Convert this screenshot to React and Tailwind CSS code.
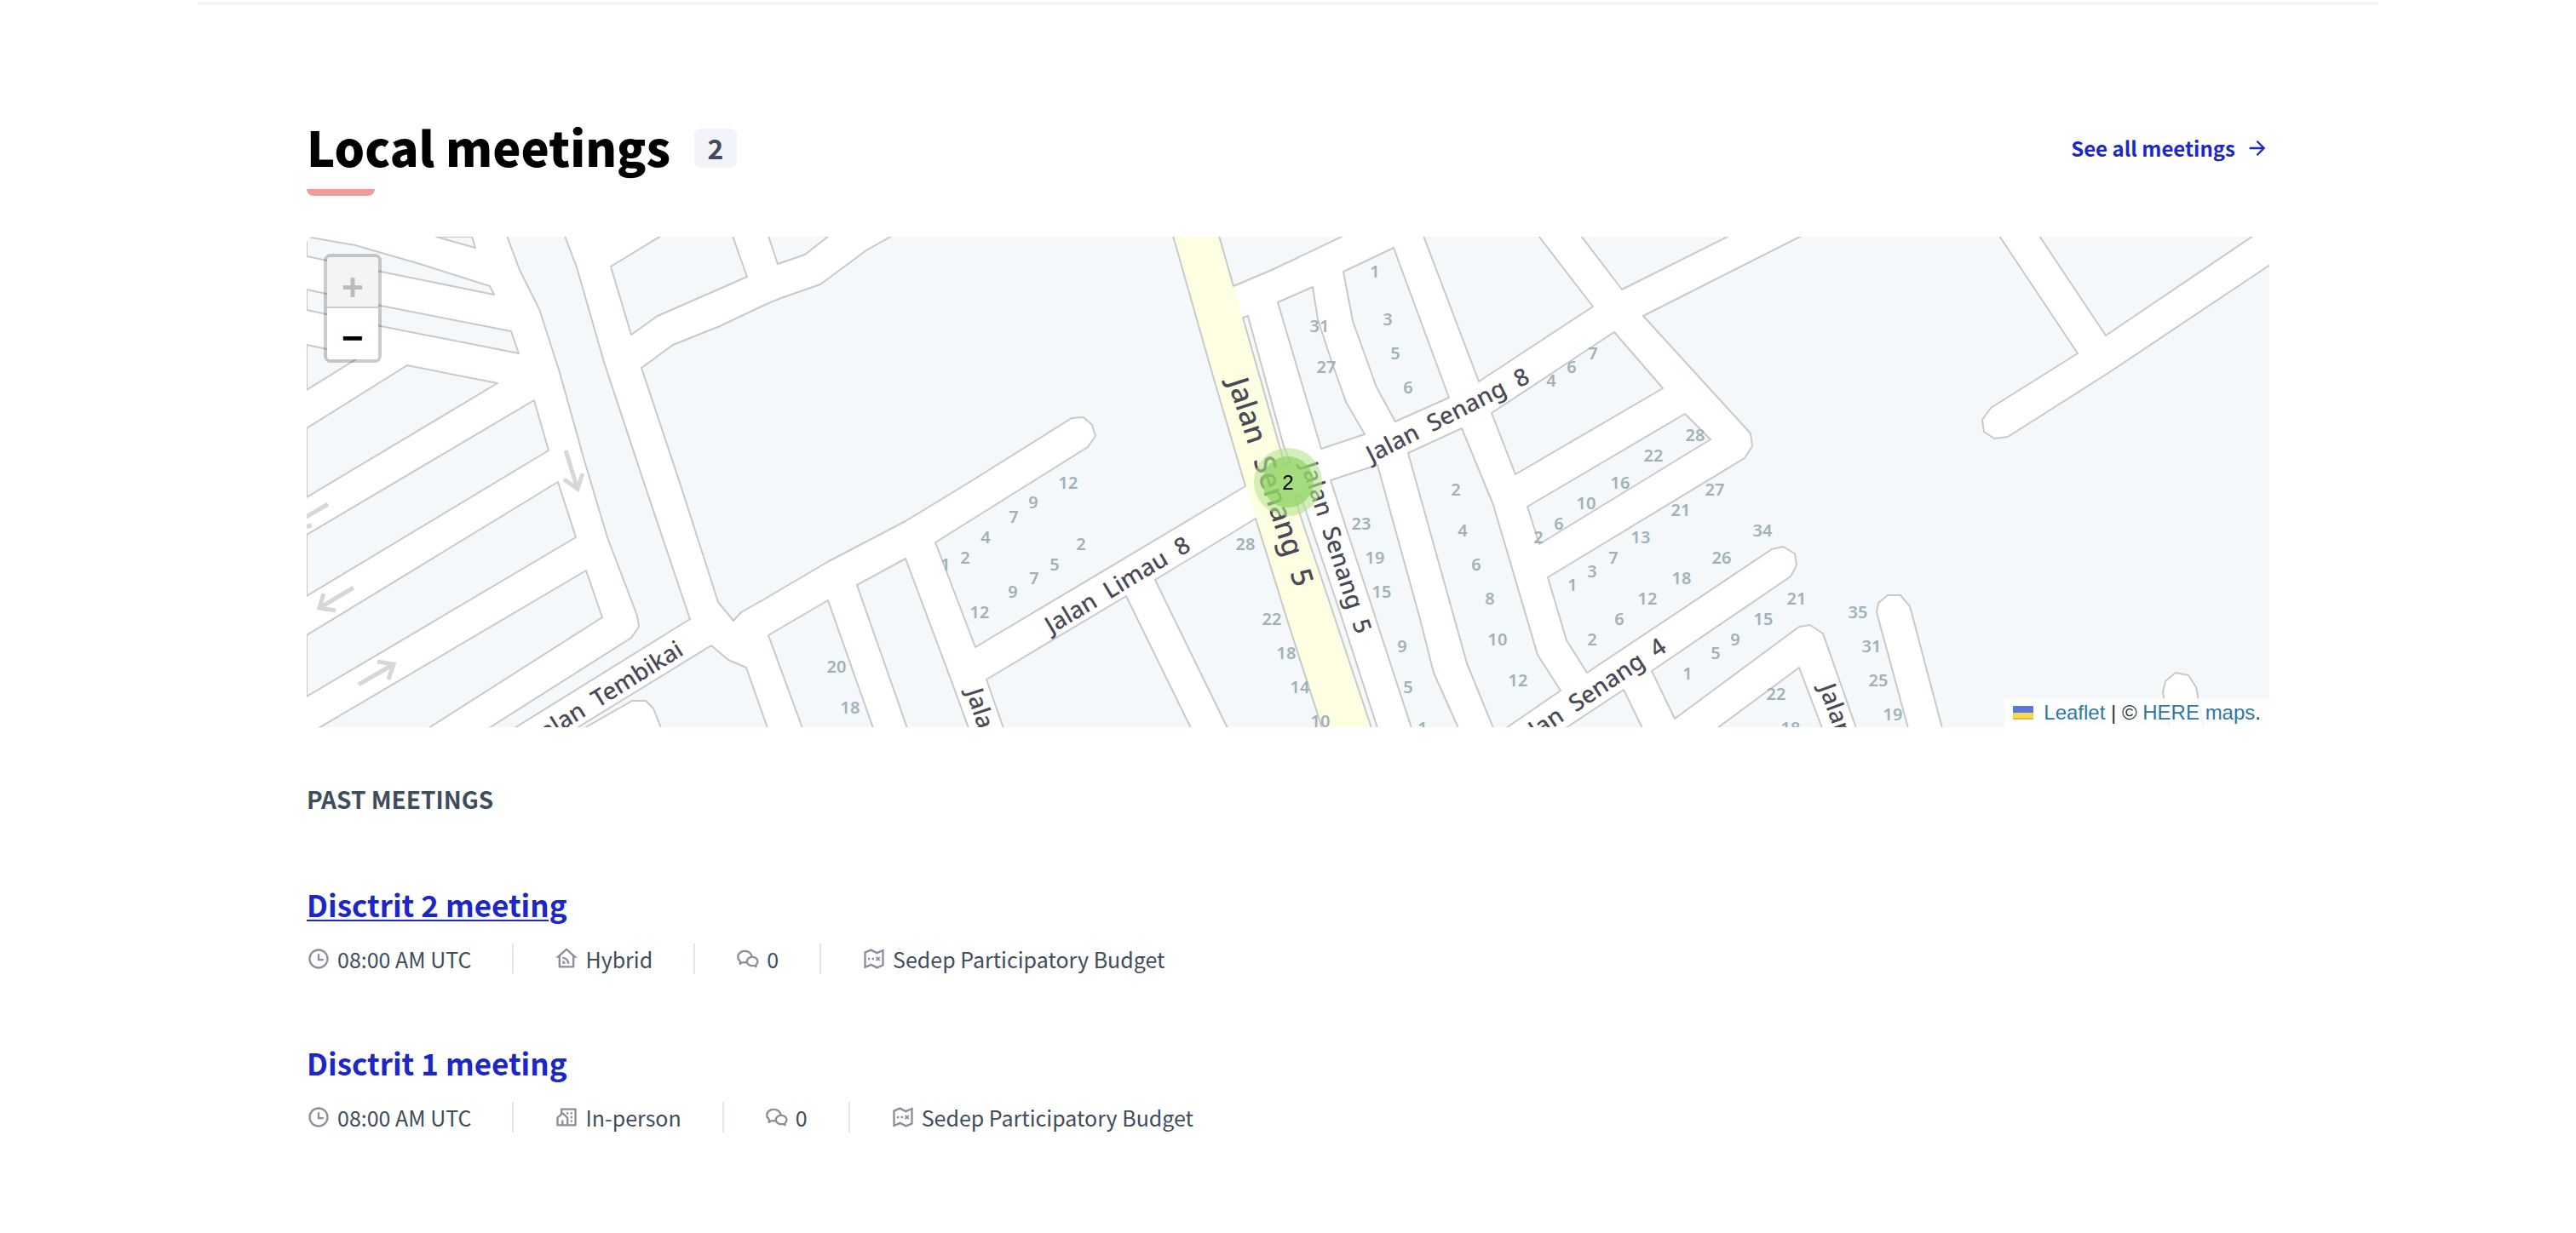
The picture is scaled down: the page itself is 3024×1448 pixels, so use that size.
import React from "react";
import {
  RiArrowRightLine,
  RiCommunityLine,
  RiHomeWifiLine,
  RiTimeLine,
  RiTreasureMapLine,
  RiWechatLine,
} from "react-icons/ri";

// City blocks; the white gaps between them read as streets.
const BLOCKS = [
  "152,0 198,13 194,0",
  "0,0 57,10 133,32 215,58 220,68 87,41 0,23",
  "0,62 87,81 240,111 249,137 87,105 0,86",
  "0,127 24,132 64,140 0,180",
  "118,151 224,172 0,306 0,225",
  "267,192 284,251 0,422 0,350",
  "295,288 316,353 0,540 0,468",
  "328,392 347,447 143,577 14,577",
  "235,-1 250,39 273,85 296,156 326,263 353,353 388,445 390,458 381,471 214,577 244,577 450,449 397,292 349,147 317,36 303,-1",
  "357,35 416,-1 500,-1 517,47 412,93 381,115",
  "542,-1 553,32 585,21 613,-1",
  "393,154 430,127 485,105 540,79 557,72 603,56 657,16 687,-1 1017,-1 1033,55 1060,150 1102,293 785,482 738,359 917,247 926,234 922,221 912,212 898,213 780,287 703,334 613,381 540,424 510,441 501,451 483,429 439,292",
  "475,480 495,497 516,506 541,577 416,577 407,554 398,545 382,545 326,577 317,577",
  "542,468 612,427 665,577 582,577",
  "646,409 703,378 757,522 777,577 705,577",
  "798,520 962,422 1038,577 818,577",
  "996,403 1114,331 1153,456 1192,577 1081,577",
  "1099,95 1105,93 1147,246 1155,265 1148,267 1142,246",
  "1160,305 1167,303 1175,328 1213,441 1257,577 1250,577 1197,418 1166,326",
  "1071,-1 1088,58 1133,39 1217,-1",
  "1140,77 1181,59 1187,97 1203,146 1220,194 1242,232 1191,249",
  "1217,41 1276,13 1341,189 1278,217 1256,177 1228,99",
  "1311,-1 1376,170 1510,82 1446,-1",
  "1496,-1 1544,62 1670,-1",
  "1569,93 1755,-1 1987,-1 2079,137 1977,201 1967,215 1969,229 1981,237 1997,235 2115,160 2305,33 2305,577 2227,577 2218,529 2209,515 2194,512 2182,522 2179,535 2187,577 1920,577 1882,434 1871,421 1856,421 1845,430 1843,441 1880,577 1819,577 1780,466 1765,456 1752,458 1606,566 1579,510 1742,399 1749,386 1747,372 1733,364 1720,367 1503,512 1479,474 1457,400 1688,260 1697,246 1695,231",
  "1535,112 1592,178 1419,279 1391,207",
  "1618,208 1648,238 1447,361 1433,317",
  "1293,254 1356,225 1393,315 1445,491 1472,533 1408,577 1393,577 1362,501",
  "1202,286 1257,268 1307,449 1323,512 1352,577 1297,577",
  "1546,532 1568,577 1478,577",
  "1752,506 1779,577 1656,577",
  "2034,-1 2112,116 2285,-1",
];

const MAIN_ROAD =
  "1017,0 1071,0 1088,58 1099,95 1142,246 1166,326 1197,418 1250,576 1192,576 1153,456 1114,331 1102,293 1060,150 1033,55";

const ARROWS = [
  "M304 251L318 296M302 285L318 296L324 278",
  "M55 412L15 436M20 419L15 436L34 439",
  "M25 314L-4 331M-4 341L6 339",
  "M61 526L102 502M83 499L102 502L96 520",
];

const HOUSES = [
  [894, 289, "12"], [853, 312, "9"], [830, 329, "7"], [797, 353, "4"], [773, 377, "2"], [750, 385, "1"],
  [909, 361, "2"], [878, 385, "5"], [854, 401, "7"], [829, 417, "9"], [790, 441, "12"], [622, 505, "20"],
  [638, 553, "18"], [1254, 41, "1"], [1269, 97, "3"], [1278, 137, "5"], [1293, 177, "6"], [1189, 105, "31"],
  [1197, 153, "27"], [1485, 153, "6"], [1461, 169, "4"], [1102, 361, "28"], [1133, 449, "22"], [1150, 489, "18"],
  [1166, 529, "14"], [1190, 569, "10"], [1238, 337, "23"], [1254, 377, "19"], [1262, 417, "15"], [1286, 481, "9"],
  [1293, 529, "5"], [1310, 577, "1"], [1349, 297, "2"], [1357, 345, "4"], [1373, 385, "6"], [1389, 425, "8"],
  [1398, 473, "10"], [1422, 521, "12"], [1510, 137, "7"], [1630, 233, "28"], [1581, 257, "22"], [1542, 289, "16"],
  [1502, 313, "10"], [1470, 337, "6"], [1446, 353, "2"], [1653, 297, "27"], [1613, 321, "21"], [1566, 353, "13"],
  [1534, 377, "7"], [1509, 393, "3"], [1486, 409, "1"], [1709, 345, "34"], [1661, 377, "26"], [1614, 401, "18"],
  [1574, 425, "12"], [1541, 449, "6"], [1509, 473, "2"], [1749, 425, "21"], [1710, 449, "15"], [1677, 473, "9"],
  [1654, 489, "5"], [1621, 513, "1"], [1821, 441, "35"], [1837, 481, "31"], [1845, 521, "25"], [1862, 561, "19"],
  [1725, 537, "22"], [1742, 577, "18"],
];

const STREETS = [
  { x: 874, y: 467, angle: -31, size: 28, anchor: "start", name: "Jalan\u00a0 Limau\u00a0 8" },
  { x: 1250, y: 266, angle: -27, size: 28, anchor: "start", name: "Jalan\u00a0 Senang\u00a0 8" },
  { x: 1598, y: 486, angle: -34, size: 28, anchor: "end", name: "Jalan\u00a0 Senang\u00a0 4" },
  { x: 444, y: 490, angle: -32, size: 28, anchor: "end", name: "Jalan\u00a0 Tembikai" },
  { x: 774, y: 534, angle: 72, size: 28, anchor: "start", name: "Jalan" },
  { x: 1775, y: 529, angle: 70, size: 28, anchor: "start", name: "Jalan" },
  { x: 1081, y: 170, angle: 72, size: 34, anchor: "start", name: "Jalan\u00a0 Senang\u00a0 5" },
  { x: 1167, y: 268, angle: 72, size: 28, anchor: "start", name: "Jalan\u00a0 Senang\u00a0 5" },
];

function StreetMap() {
  return (
    <svg
      viewBox="0 0 2304 576"
      preserveAspectRatio="xMidYMid slice"
      className="block h-full w-full bg-white"
      role="img"
      aria-label="Map of meeting locations"
    >
      <polygon points={MAIN_ROAD} fill="#fefee3" />
      <g fill="#f4f8fb" stroke="#c9cac8" strokeWidth="2" strokeLinejoin="round">
        {BLOCKS.map((points) => (
          <polygon key={points} points={points} />
        ))}
      </g>
      <g fill="none" stroke="#d6d7d7" strokeWidth="5">
        {ARROWS.map((d) => (
          <path key={d} d={d} />
        ))}
      </g>
      <g fill="#a2b1b5" fontSize="20" fontWeight="600" textAnchor="middle" fontFamily='"Noto Sans", sans-serif'>
        {HOUSES.map(([x, y, n]) => (
          <text key={x + "-" + y} x={x} y={y + 7}>
            {n}
          </text>
        ))}
      </g>
      <g fill="#4a4a56" fontWeight="500" fontFamily='"Noto Sans", sans-serif'>
        {STREETS.map((s) => (
          <text
            key={s.x + "-" + s.y}
            x={s.x}
            y={s.y}
            fontSize={s.size}
            textAnchor={s.anchor}
            transform={`rotate(${s.angle} ${s.x} ${s.y})`}
          >
            {s.name}
          </text>
        ))}
      </g>
    </svg>
  );
}

function MapPanel() {
  return (
    <div className="relative h-[576px] overflow-hidden rounded-lg font-['Liberation_Sans',sans-serif]">
      <StreetMap />

      <button
        type="button"
        aria-label="2 meetings"
        className="absolute top-1/2 left-1/2 flex size-20 -translate-x-1/2 -translate-y-1/2 items-center justify-center rounded-full bg-[#b5e28c]/60"
      >
        <span className="flex size-[60px] items-center justify-center rounded-full bg-[#85d15a]/60 pt-0.5 text-2xl text-black">
          2
        </span>
      </button>

      <div className="absolute top-5 left-5 flex w-[68px] flex-col overflow-hidden rounded-lg border-4 border-black/20 bg-clip-padding font-['Liberation_Mono',monospace] text-[44px] font-bold">
        <button
          type="button"
          disabled
          aria-label="Zoom in"
          className="flex h-[60px] items-center justify-center border-b-2 border-[#ccc] bg-[#f4f4f4] pt-5 text-[#bbb]"
        >
          +
        </button>
        <button
          type="button"
          aria-label="Zoom out"
          className="flex h-[60px] items-center justify-center bg-white pt-4 text-black"
        >
          −
        </button>
      </div>

      <div className="absolute right-0 bottom-0 flex h-[34px] items-center bg-white/80 px-[10px] text-2xl text-[#333]">
        <svg viewBox="0 0 12 8" className="mr-3 h-4 w-6" aria-hidden="true">
          <path fill="#5779da" d="M0 0h12v4H0z" />
          <path fill="#fbd84a" d="M0 4h12v3H0z" />
          <path fill="#dfbd45" d="M0 7h12v1H0z" />
        </svg>
        <p>
          <a href="#leaflet" className="text-[#2f77a5]">Leaflet</a> | ©{" "}
          <a href="#here" className="text-[#2f77a5]">HERE maps</a>.
        </p>
      </div>
    </div>
  );
}

const MEETINGS = [
  { title: "Disctrit 2 meeting", underlined: true, type: "Hybrid", TypeIcon: RiHomeWifiLine },
  { title: "Disctrit 1 meeting", underlined: false, type: "In-person", TypeIcon: RiCommunityLine },
];

function Meta({ Icon, children }) {
  return (
    <li className="flex items-center gap-2 border-l-2 border-[#e1e5ef] px-12 first:border-l-0 first:pl-0">
      <Icon className="size-7 text-[#8c8d9a]" aria-hidden="true" />
      <span>{children}</span>
    </li>
  );
}

function Meeting({ title, underlined, type, TypeIcon }) {
  return (
    <article className="flex flex-col gap-6">
      <h4 className="text-[35px] leading-[44px] font-bold text-[#1b27c9]">
        <a
          href="#meeting"
          className={underlined ? "underline decoration-2 underline-offset-3" : "no-underline"}
        >
          {title}
        </a>
      </h4>
      <ul className="flex text-[25px] leading-9 text-[#3e4c5c]">
        <Meta Icon={RiTimeLine}>08:00 AM UTC</Meta>
        <Meta Icon={TypeIcon}>{type}</Meta>
        <Meta Icon={RiWechatLine}>0</Meta>
        <Meta Icon={RiTreasureMapLine}>Sedep Participatory Budget</Meta>
      </ul>
    </article>
  );
}

export default function App() {
  return (
    <main className="bg-white px-6 pt-0.5 font-['Noto_Sans_CJK_SC','Noto_Sans',sans-serif]">
      <section className="mx-auto max-w-[2560px] border-t-4 border-[#f3f4f9] px-32 pt-[126px] pb-24">
        <header className="flex items-center justify-between">
          <div className="flex items-center gap-7">
            <h2 className="pb-1 text-[56px] leading-[80px] font-black text-black">Local meetings</h2>
            <span className="flex h-[46px] w-[50px] items-center justify-center rounded-lg bg-[#f3f4f9] pb-0.5 text-[32px] leading-none font-bold text-[#3e4c5c]">
              2
            </span>
          </div>
          <a href="#meetings" className="flex items-center gap-3 text-2xl leading-9 font-bold text-[#1b27c9]">
            See all meetings
            <RiArrowRightLine className="size-7" aria-hidden="true" />
          </a>
        </header>
        <div className="mt-1.5 mb-12 h-2 w-20 rounded-b-lg bg-[#f19a98]" />

        <MapPanel />

        <h3 className="mt-16 text-[28px] leading-10 font-bold text-[#3e4c5c]">PAST MEETINGS</h3>
        <div className="mt-[82px] flex flex-col gap-[82px]">
          {MEETINGS.map((m) => (
            <Meeting key={m.title} {...m} />
          ))}
        </div>
      </section>
    </main>
  );
}
